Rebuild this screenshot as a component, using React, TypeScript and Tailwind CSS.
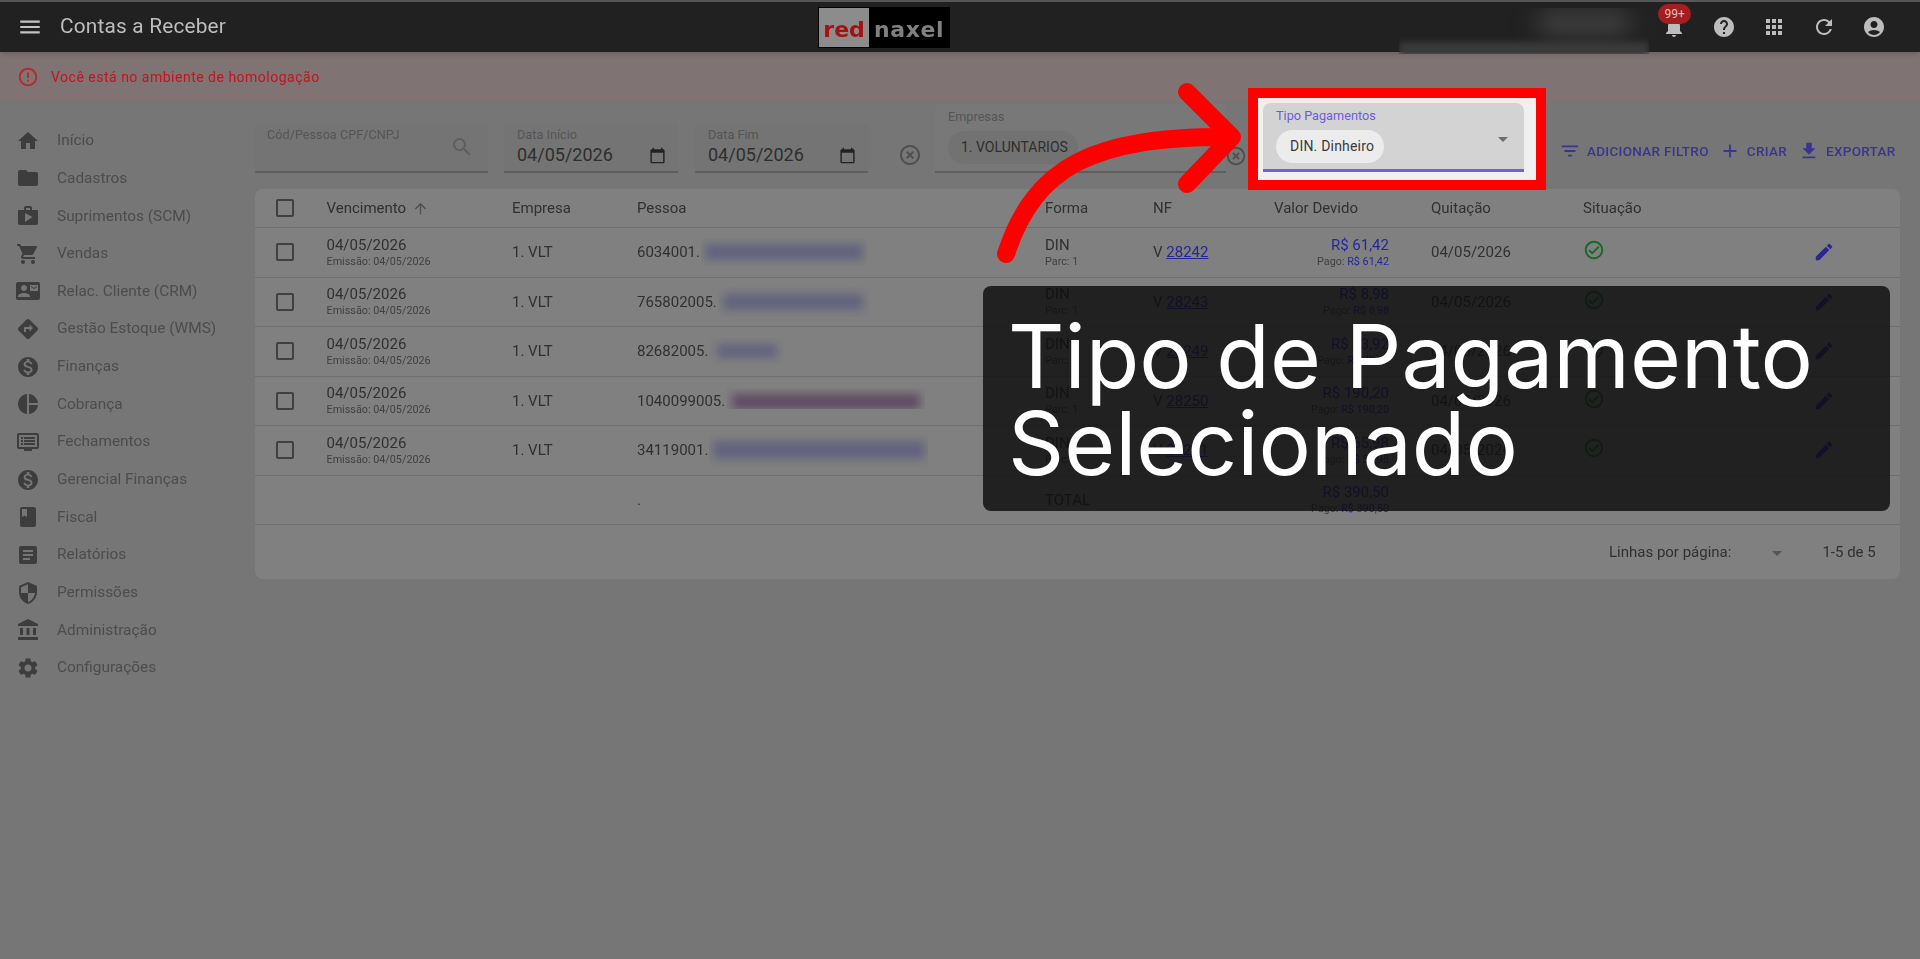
import React from 'react';
import {
  MdMenu, MdNotifications, MdHelp, MdApps, MdRefresh, MdAccountCircle, MdErrorOutline,
  MdHome, MdFolder, MdShop, MdShoppingCart, MdContactMail, MdDirections, MdMonetizationOn,
  MdPieChart, MdBook, MdArticle, MdSecurity, MdAccountBalance, MdSettings,
  MdSearch, MdCalendarToday, MdHighlightOff, MdArrowDropDown, MdFilterList, MdAdd, MdFileDownload,
  MdCheckBoxOutlineBlank, MdArrowUpward, MdOutlineCheckCircle, MdEdit,
} from 'react-icons/md';

const ClosingIcon = ({ size, className }: { size: number; className: string }) => (
  <svg width={size} height={size} viewBox="0 0 24 24" className={className} fill="currentColor">
    <path d="M21 3H3c-1.1 0-2 .9-2 2v12c0 1.1.9 2 2 2h5v2h8v-2h5c1.1 0 2-.9 2-2V5c0-1.1-.9-2-2-2zm0 14H3V5h18v12z" />
    <path d="M5 7h2v2H5zM8 7h11v2H8zM5 10h2v2H5zM8 10h11v2H8zM5 13h2v2H5zM8 13h11v2H8z" />
  </svg>
);

const menu = [
  { label: 'Início', Icon: MdHome },
  { label: 'Cadastros', Icon: MdFolder },
  { label: 'Suprimentos (SCM)', Icon: MdShop },
  { label: 'Vendas', Icon: MdShoppingCart },
  { label: 'Relac. Cliente (CRM)', Icon: MdContactMail },
  { label: 'Gestão Estoque (WMS)', Icon: MdDirections },
  { label: 'Finanças', Icon: MdMonetizationOn },
  { label: 'Cobrança', Icon: MdPieChart },
  { label: 'Fechamentos', Icon: ClosingIcon },
  { label: 'Gerencial Finanças', Icon: MdMonetizationOn },
  { label: 'Fiscal', Icon: MdBook },
  { label: 'Relatórios', Icon: MdArticle },
  { label: 'Permissões', Icon: MdSecurity },
  { label: 'Administração', Icon: MdAccountBalance },
  { label: 'Configurações', Icon: MdSettings },
];

const rows = [
  { code: '6034001.', nf: '28242', value: '61,42', blurW: 'w-[166px]', blurH: 'h-[28px] items-center', bar: 'bg-[#62627f]', barW: 'w-[158px]', barH: 'h-[16px]' },
  { code: '765802005.', nf: '28243', value: '8,98', blurW: 'w-[151px]', blurH: 'h-[30px] items-center', bar: 'bg-[#62627f]', barW: 'w-[140px]', barH: 'h-[16px]' },
  { code: '82682005.', nf: '28249', value: '73,92', blurW: 'w-[75px]', blurH: 'h-[26px] items-center', bar: 'bg-[#62627f]', barW: 'w-[60px]', barH: 'h-[14px]' },
  { code: '1040099005.', nf: '28250', value: '190,20', blurW: 'w-[199px]', blurH: 'h-[21px] mb-[4px] items-end', bar: 'bg-[#5e4a62]', barW: 'w-[188px]', barH: 'h-[15px]' },
  { code: '34119001.', nf: '28251', value: '55,98', blurW: 'w-[219px]', blurH: 'h-[36px] items-center', bar: 'bg-[#62627f]', barW: 'w-[212px]', barH: 'h-[18px]' },
];

const gridCols = 'grid grid-cols-[71.5px_185.5px_125px_408px_108px_121px_157px_152px_229px_24px] items-center';

const Pill = ({ children, className }: { children: React.ReactNode; className: string }) => (
  <div className={'flex items-center rounded-full h-[33px] text-[14px] ' + className}>{children}</div>
);

const DateField = ({ label, value, className }: { label: string; value: string; className: string }) => (
  <div className={'h-[50px] rounded-t bg-[#747474] border-b-2 border-[#5e5e5e] relative pl-[13px] pr-[12px] ' + className}>
    <div className="text-[12.7px] leading-[14px] pt-[5px] text-[#555]">{label}</div>
    <div className="flex items-center justify-between mt-[2px]">
      <span className="text-[18px] leading-[22px] text-[#2e2e2e]">{value}</span>
      <MdCalendarToday size={17} className="text-[#222]" />
    </div>
  </div>
);

const App = () => (
  <div className="relative w-full h-screen overflow-hidden bg-[#767676] font-['Roboto',sans-serif]">
    <div className="h-full flex flex-col blur-[0.6px]">
      {/* Top bar */}
      <header className="h-[52px] shrink-0 bg-[#212121] border-t-2 border-[#565656] flex items-center text-[#bdbdbd] shadow-md relative">
        <MdMenu size={26} className="ml-[17px] text-[#c4c4c4]" />
        <span className="ml-[17px] text-[20.8px] tracking-[0.2px]">Contas a Receber</span>
        <div className="ml-[592px] w-[132px] h-[41px] bg-black flex items-center pl-[1px] font-['DejaVu_Sans',sans-serif] font-bold text-[22px]">
          <div className="w-[50px] h-[39px] bg-[#8c8c8c] flex items-center justify-center pt-[4px] text-[#a80f0f]">red</div>
          <div className="ml-[5px] pt-[4px] tracking-[0.6px] text-[#808080]">naxel</div>
        </div>
        <div className="ml-[449px] w-[250px] h-[46px] mt-[6px] self-start overflow-hidden relative">
          <div className="absolute left-[140px] top-[4px] w-[90px] h-[22px] bg-[#454545] blur-md" />
          <div className="absolute left-[0px] top-[34px] w-[250px] h-[14px] bg-[#3a3a3a] blur-[3px]" />
        </div>
        <div className="ml-[13px] relative w-[24px] h-[24px] text-[#bdbdbd]">
          <MdNotifications size={24} />
          <div className="absolute left-[-4px] top-[-11px] w-[33px] h-[20px] rounded-full bg-[#a31f1f] text-[#e3bcbc] text-[12px] flex items-center justify-center">99+</div>
        </div>
        <div className="ml-[26px] flex items-center gap-[26px] text-[#bdbdbd]">
          <MdHelp size={24} />
          <MdApps size={24} />
          <MdRefresh size={24} />
          <MdAccountCircle size={24} />
        </div>
      </header>

      {/* Alert */}
      <div className="h-[50px] shrink-0 bg-[#7f7473] rounded-bl-lg flex items-center pl-[17px]">
        <MdErrorOutline size={22} className="text-[#b8282c]" />
        <span className="ml-[12px] text-[14px] tracking-[0.5px] text-[#c4141c]">Você está no ambiente de homologação</span>
      </div>

      <div className="flex flex-1 min-h-0">
        {/* Sidebar */}
        <nav className="w-[255px] shrink-0 pt-[20px]">
          {menu.map(({ label, Icon }) => (
            <div key={label} className="h-[37.65px] flex items-center pl-[16px]">
              <Icon size={24} className="text-[#3d3d3d]" />
              <span className="ml-[17px] text-[15.4px] text-[#4c4c4c]">{label}</span>
            </div>
          ))}
        </nav>

        <main className="flex-1 pr-[20px]">
          {/* Filters */}
          <div className="flex items-end h-[70px] mt-[1px]">
            <div className="w-[233px] h-[50px] rounded-t bg-[#747474] border-b-2 border-[#5e5e5e] pl-[12px] pr-[14px] flex justify-between">
              <span className="text-[12.7px] leading-[14px] pt-[5px] text-[#555]">Cód/Pessoa CPF/CNPJ</span>
              <MdSearch size={24} className="mt-[12px] text-[#5e5e5e]" />
            </div>
            <DateField label="Data Início" value="04/05/2026" className="w-[174px] ml-[16px]" />
            <DateField label="Data Fim" value="04/05/2026" className="w-[173px] ml-[17px]" />
            <MdHighlightOff size={24} className="ml-[30px] mb-[6px] text-[#4f4f4f]" />
            <div className="ml-[13px] w-[291px] h-[69px] rounded-t bg-[#787878] border-b-2 border-[#5e5e5e] pl-[13px]">
              <div className="text-[12.7px] leading-[14px] pt-[6px] text-[#555]">Empresas</div>
              <Pill className="mt-[7px] w-[130px] bg-[#727272] pl-[13px] text-[#2e2e2e]">1. VOLUNTARIOS</Pill>
            </div>
            <MdHighlightOff size={22} className="mb-[6px] ml-[-1px] text-[#4f4f4f]" />
          </div>

          {/* Table */}
          <section className="mt-[16px] w-[1645px] h-[390px] rounded-lg bg-[#808080] text-[#303030] text-[15px]">
            <div className={gridCols + ' h-[39px] border-b border-[#6f6f6f]'}>
              <MdCheckBoxOutlineBlank size={24} className="ml-[18px] text-[#404040]" />
              <div className="flex items-center gap-[6px]">Vencimento <MdArrowUpward size={17} className="text-[#505050]" /></div>
              <div>Empresa</div>
              <div>Pessoa</div>
              <div>Forma</div>
              <div>NF</div>
              <div>Valor Devido</div>
              <div>Quitação</div>
              <div>Situação</div>
              <div />
            </div>

            {rows.map((r) => (
              <div key={r.nf} className={gridCols + ' h-[49.5px] border-b border-[#6f6f6f]'}>
                <MdCheckBoxOutlineBlank size={24} className="ml-[18px] text-[#404040]" />
                <div>
                  <div className="leading-[18px]">04/05/2026</div>
                  <div className="text-[10.8px] leading-[15px] text-[#404040]">Emissão: 04/05/2026</div>
                </div>
                <div>1. VLT</div>
                <div className="flex items-center">
                  <span>{r.code}</span>
                  <div className={'ml-[1px] overflow-hidden flex justify-center ' + r.blurW + ' ' + r.blurH}>
                    <div className={'blur-[5px] ' + r.bar + ' ' + r.barW + ' ' + r.barH} />
                  </div>
                </div>
                <div>
                  <div className="leading-[18px]">DIN</div>
                  <div className="text-[10.8px] leading-[15px] text-[#404040]">Parc: 1</div>
                </div>
                <div>V <span className="underline text-[#26269a]">{r.nf}</span></div>
                <div className="pr-[42px] text-right">
                  <div className="leading-[18px] text-[#26269a]">R$ {r.value}</div>
                  <div className="text-[10.8px] leading-[15px] text-[#404040]">Pago: <span className="text-[#26269a]">R$ {r.value}</span></div>
                </div>
                <div>04/05/2026</div>
                <div><MdOutlineCheckCircle size={22} className="text-[#166824] mb-[4px]" /></div>
                <MdEdit size={22} className="ml-[1px] text-[#2c2490]" />
              </div>
            ))}

            <div className={gridCols + ' h-[49.5px] border-b border-[#6f6f6f]'}>
              <div />
              <div />
              <div />
              <div>.</div>
              <div>TOTAL</div>
              <div />
              <div className="pr-[42px] text-right">
                <div className="leading-[18px] text-[#26269a]">R$ 390,50</div>
                <div className="text-[10.8px] leading-[15px] text-[#404040]">Pago: <span className="text-[#26269a]">R$ 390,50</span></div>
              </div>
            </div>

            <div className="flex items-center h-[55px]">
              <span className="ml-[1354px]">Linhas por página:</span>
              <MdArrowDropDown size={24} className="ml-[34px] text-[#555]" />
              <span className="ml-[33px]">1-5 de 5</span>
            </div>
          </section>
        </main>
      </div>

      {/* Actions */}
      <div className="absolute left-[1559px] top-[140px] flex items-center text-[13.5px] font-medium tracking-[0.3px] text-[#3a3490]">
        <MdFilterList size={22} />
        <span className="ml-[6px]">ADICIONAR FILTRO</span>
        <MdAdd size={22} className="ml-[10px]" />
        <span className="ml-[6px]">CRIAR</span>
        <MdFileDownload size={22} className="ml-[11px]" />
        <span className="ml-[6px]">EXPORTAR</span>
      </div>
    </div>

    {/* Highlighted field */}
    <div className="absolute left-[1248px] top-[88px] w-[298px] h-[102px] border-[10px] border-[#ff0000] bg-[#f0f0f0] overflow-hidden">
      <div className="h-[5px] bg-[#fde9e9]" />
      <div className="ml-[5px] w-[261px] h-[69px] rounded-t-lg bg-[#d3d3d3] border-b-[3px] border-[#6f62dc] pl-[13px] pr-[14px]">
        <div className="text-[12.7px] leading-[14px] pt-[6px] text-[#6a5ce0]">Tipo Pagamentos</div>
        <div className="flex justify-between">
          <Pill className="mt-[7px] w-[108px] bg-[#ececec] pl-[14px] text-[#3a3a3a] tracking-[0.2px]">DIN. Dinheiro</Pill>
          <MdArrowDropDown size={24} className="text-[#6e6e6e] mt-[4px] mr-[-5px]" />
        </div>
      </div>
    </div>

    {/* Arrow */}
    <svg className="absolute inset-0 w-full h-full pointer-events-none" viewBox="0 0 1920 959" fill="none">
      <path d="M1006 254C1035 165 1095 137 1225 137" stroke="#ff0000" strokeWidth="18" strokeLinecap="round" />
      <path d="M1187 92L1232 137L1187 184" stroke="#ff0000" strokeWidth="18" strokeLinecap="round" strokeLinejoin="round" />
    </svg>

    {/* Caption */}
    <div className="absolute left-[983px] top-[286px] w-[907px] h-[225px] rounded-lg bg-[rgba(12,12,12,0.82)] pl-[25px] pt-[27px] text-white text-[87.5px] leading-[87px] font-['Inter',sans-serif]">
      Tipo de Pagamento<br />Selecionado
    </div>
  </div>
);

export default App;
